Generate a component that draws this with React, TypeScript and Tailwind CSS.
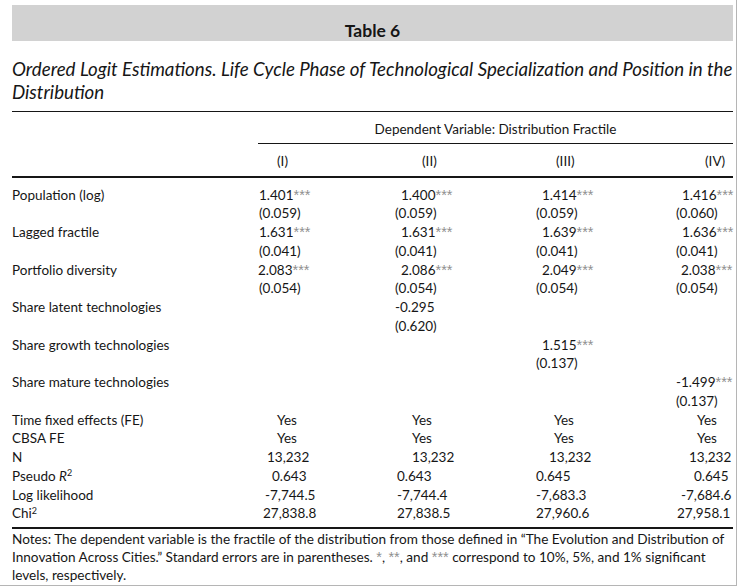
import React from 'react';

type Cell = { t: string; star?: boolean; pl: string } | null;

interface Row {
  label?: React.ReactNode;
  cells: Cell[];
}

const Stars = ({ n = 3 }: { n?: number }) => (
  <span className="text-[#8f8f8f] font-['Liberation_Sans',sans-serif] text-[14.5px] leading-[0]">{'*'.repeat(n)}</span>
);

// coefficient rows, indents follow the decimal alignment of the printed table
const coefRows: Row[] = [
  {
    label: 'Population (log)',
    cells: [
      { t: '1.401', star: true, pl: 'pl-[2px]' },
      { t: '1.400', star: true, pl: 'pl-[7px]' },
      { t: '1.414', star: true, pl: 'pl-[7px]' },
      { t: '1.416', star: true, pl: 'pl-[6px]' },
    ],
  },
  {
    cells: [
      { t: '(0.059)', pl: 'pl-[2px]' },
      { t: '(0.059)', pl: 'pl-[1px]' },
      { t: '(0.059)', pl: 'pl-[1px]' },
      { t: '(0.060)', pl: 'pl-0' },
    ],
  },
  {
    label: 'Lagged fractile',
    cells: [
      { t: '1.631', star: true, pl: 'pl-[2px]' },
      { t: '1.631', star: true, pl: 'pl-[7px]' },
      { t: '1.639', star: true, pl: 'pl-[7px]' },
      { t: '1.636', star: true, pl: 'pl-[6px]' },
    ],
  },
  {
    cells: [
      { t: '(0.041)', pl: 'pl-[2px]' },
      { t: '(0.041)', pl: 'pl-[1px]' },
      { t: '(0.041)', pl: 'pl-[1px]' },
      { t: '(0.041)', pl: 'pl-0' },
    ],
  },
  {
    label: 'Portfolio diversity',
    cells: [
      { t: '2.083', star: true, pl: 'pl-[1px]' },
      { t: '2.086', star: true, pl: 'pl-[7px]' },
      { t: '2.049', star: true, pl: 'pl-[7px]' },
      { t: '2.038', star: true, pl: 'pl-[5px]' },
    ],
  },
  {
    cells: [
      { t: '(0.054)', pl: 'pl-[2px]' },
      { t: '(0.054)', pl: 'pl-[1px]' },
      { t: '(0.054)', pl: 'pl-[1px]' },
      { t: '(0.054)', pl: 'pl-0' },
    ],
  },
  { label: 'Share latent technologies', cells: [null, { t: '-0.295', pl: 'pl-[1px]' }, null, null] },
  { cells: [null, { t: '(0.620)', pl: 'pl-[1px]' }, null, null] },
  { label: 'Share growth technologies', cells: [null, null, { t: '1.515', star: true, pl: 'pl-[7px]' }, null] },
  { cells: [null, null, { t: '(0.137)', pl: 'pl-[1px]' }, null] },
  { label: 'Share mature technologies', cells: [null, null, null, { t: '-1.499', star: true, pl: 'pl-0' }] },
  { cells: [null, null, null, { t: '(0.137)', pl: 'pl-0' }] },
];

const statRows: Row[] = [
  {
    label: 'Time fixed effects (FE)',
    cells: [
      { t: 'Yes', pl: 'pl-[20px]' },
      { t: 'Yes', pl: 'pl-[18px]' },
      { t: 'Yes', pl: 'pl-[19px]' },
      { t: 'Yes', pl: 'pl-[21px]' },
    ],
  },
  {
    label: 'CBSA FE',
    cells: [
      { t: 'Yes', pl: 'pl-[20px]' },
      { t: 'Yes', pl: 'pl-[18px]' },
      { t: 'Yes', pl: 'pl-[19px]' },
      { t: 'Yes', pl: 'pl-[21px]' },
    ],
  },
  {
    label: 'N',
    cells: [
      { t: '13,232', pl: 'pl-[10px]' },
      { t: '13,232', pl: 'pl-[18px]' },
      { t: '13,232', pl: 'pl-[14px]' },
      { t: '13,232', pl: 'pl-[13px]' },
    ],
  },
  {
    label: (
      <>
        Pseudo <span className="italic">R</span>
        <sup className="text-[9px]">2</sup>
      </>
    ),
    cells: [
      { t: '0.643', pl: 'pl-[15px]' },
      { t: '0.643', pl: 'pl-[3px]' },
      { t: '0.645', pl: 'pl-[1px]' },
      { t: '0.645', pl: 'pl-[18px]' },
    ],
  },
  {
    label: 'Log likelihood',
    cells: [
      { t: '-7,744.5', pl: 'pl-[8px]' },
      { t: '-7,744.4', pl: 'pl-[3px]' },
      { t: '-7,683.3', pl: 'pl-[1px]' },
      { t: '-7,684.6', pl: 'pl-[5px]' },
    ],
  },
  {
    label: (
      <>
        Chi<sup className="text-[9px]">2</sup>
      </>
    ),
    cells: [
      { t: '27,838.8', pl: 'pl-[6px]' },
      { t: '27,838.5', pl: 'pl-[3px]' },
      { t: '27,960.6', pl: 'pl-[1px]' },
      { t: '27,958.1', pl: 'pl-[1px]' },
    ],
  },
];

const GRID = 'grid grid-cols-[245px_137px_141px_141px_57px]';

function TableRow({ row }: { row: Row }) {
  return (
    <div className={`${GRID} h-[18.75px] leading-[18.75px] whitespace-nowrap`}>
      <div>{row.label}</div>
      {row.cells.map((c, i) => (
        <div key={i} className={c ? c.pl : ''}>
          {c && (
            <>
              {c.t}
              {c.star && <Stars />}
            </>
          )}
        </div>
      ))}
    </div>
  );
}

export default function App() {
  return (
    <div className="w-[737px] h-[586px] border-r border-b border-[#b5b5b5] bg-white text-[#161616] font-['Lato','Open_Sans',sans-serif] overflow-hidden">
      <div className="pt-[5px] pl-[12px] w-[733px]">
        {/* title bar */}
        <div className="h-[36px] bg-[#d2d2d2] flex items-end justify-center">
          <span className="font-bold text-[17.5px] leading-[20px]">Table 6</span>
        </div>

        <p className="mt-[17px] italic text-[18.7px] leading-[23px] whitespace-nowrap">
          Ordered Logit Estimations. Life Cycle Phase of Technological Specialization and Position in the
          <br />
          Distribution
        </p>

        <div className="mt-[7px] border-t border-[#161616] text-[13.5px]">
          <div className="flex">
            <div className="w-[246px]" />
            <div className="flex-1 text-center h-[32px] leading-[32px] pt-[1px] border-b border-[#161616]">
              Dependent Variable: Distribution Fractile
            </div>
          </div>
          <div className={`${GRID} h-[34px] leading-[34px] border-b-2 border-[#161616]`}>
            <div />
            <div className="pl-[20px]">(I)</div>
            <div className="pl-[28px]">(II)</div>
            <div className="pl-[21px]">(III)</div>
            <div className="pl-[29px]">(IV)</div>
          </div>

          <div className="pt-[7.5px] pb-[4px] border-b-2 border-[#161616]">
            {coefRows.map((r, i) => (
              <TableRow key={`c${i}`} row={r} />
            ))}
            {statRows.map((r, i) => (
              <TableRow key={`s${i}`} row={r} />
            ))}
          </div>

          <p className="pt-[1px] leading-[18px] whitespace-nowrap text-[13.6px]">
            Notes: The dependent variable is the fractile of the distribution from those defined in “The Evolution and Distribution of
            <br />
            Innovation Across Cities.” Standard errors are in parentheses. <Stars n={1} />, <Stars n={2} />, and <Stars /> correspond to
            10%, 5%, and 1% significant
            <br />
            levels, respectively.
          </p>
        </div>
      </div>
    </div>
  );
}
